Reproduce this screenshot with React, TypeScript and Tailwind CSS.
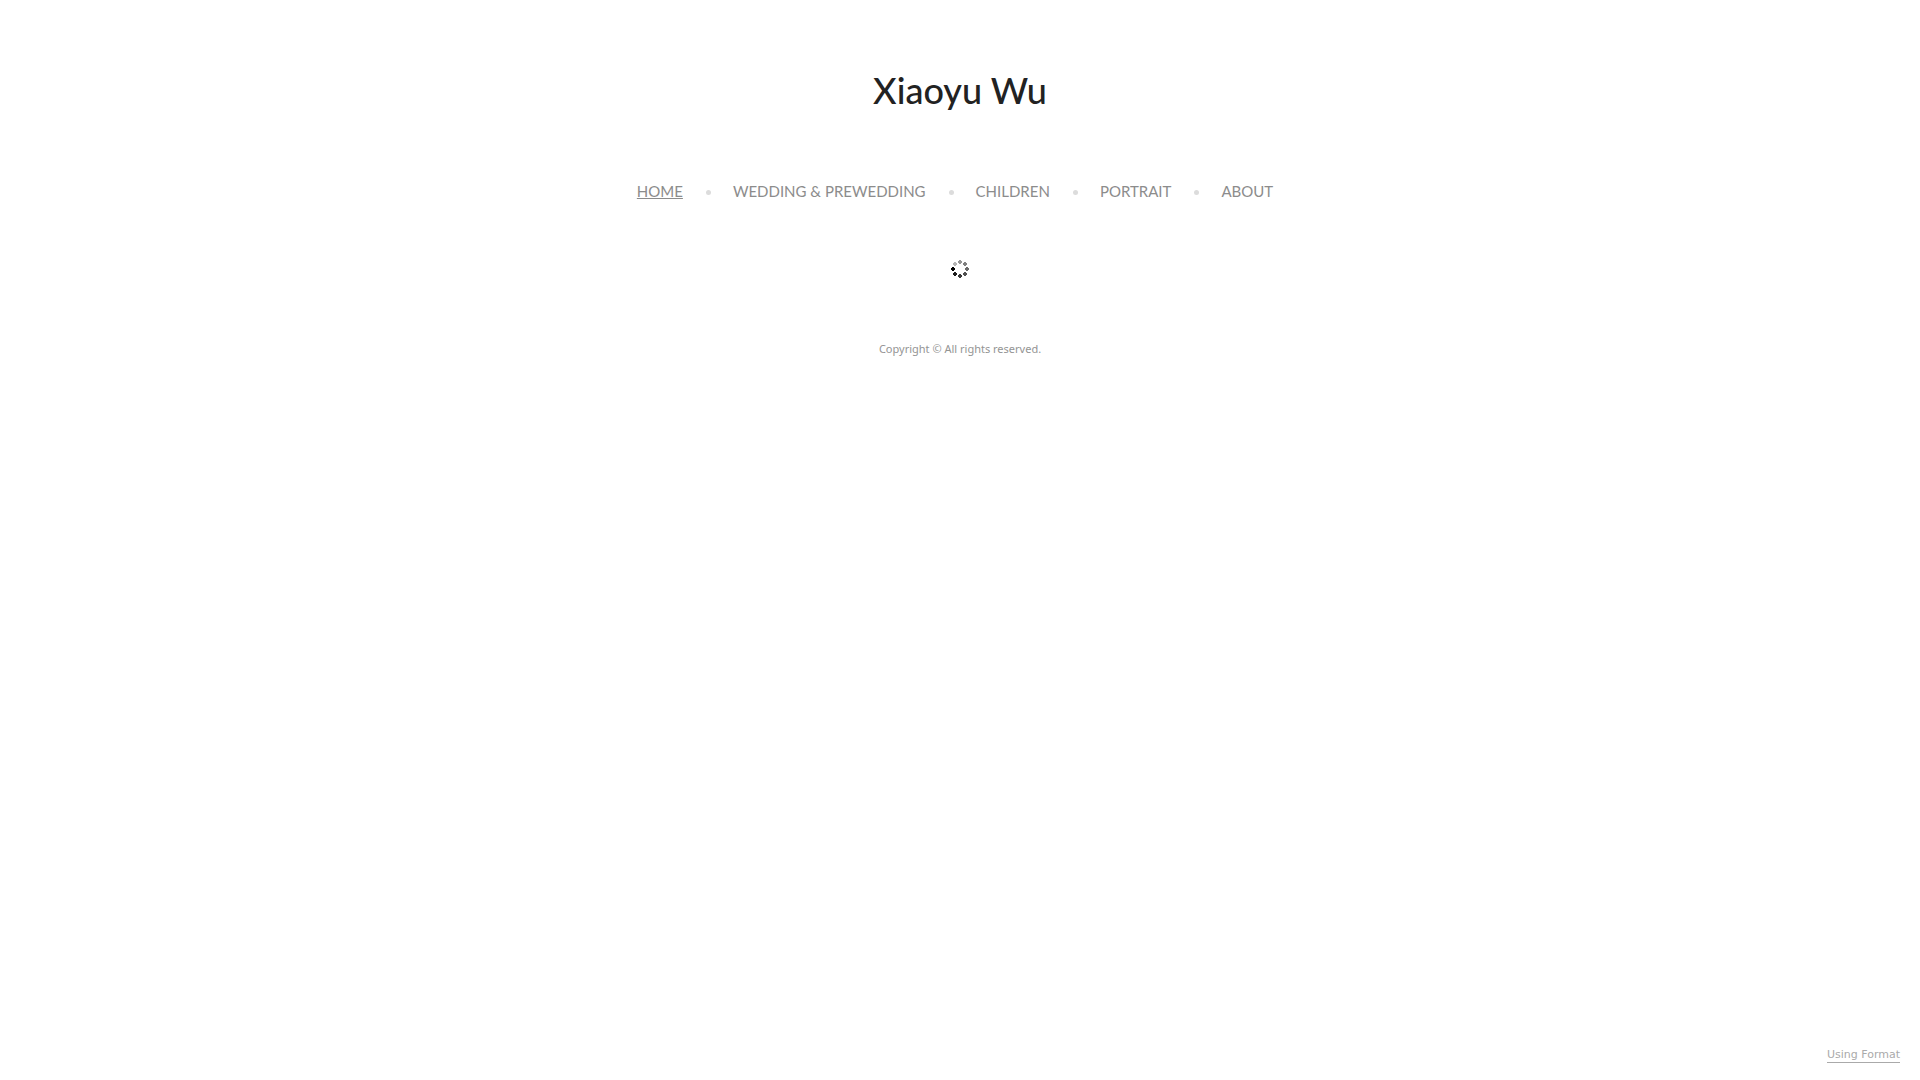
import React from 'react';

interface NavItem {
  label: string;
  href: string;
  active?: boolean;
}

const navItems: NavItem[] = [
  { label: 'Home', href: '#home', active: true },
  { label: 'Wedding & Prewedding', href: '#wedding' },
  { label: 'Children', href: '#children' },
  { label: 'Portrait', href: '#portrait' },
  { label: 'About', href: '#about' },
];

const spinnerDots = [
  { cx: 10, cy: 3, fill: '#969696' },
  { cx: 15, cy: 5, fill: '#808080' },
  { cx: 17, cy: 10, fill: '#6a6a6a' },
  { cx: 15, cy: 15, fill: '#505050' },
  { cx: 10, cy: 17, fill: '#383838' },
  { cx: 5, cy: 15, fill: '#1c1c1c' },
  { cx: 3, cy: 10, fill: '#000000' },
  { cx: 5, cy: 5, fill: '#b4b4b4' },
];

const Spinner: React.FC = () => (
  <svg className="size-5" viewBox="0 0 20 20" role="img" aria-label="Loading" shapeRendering="crispEdges">
    {spinnerDots.map(({ cx, cy, fill }) => (
      <path key={`${cx}-${cy}`} d={`M${cx - 1} ${cy - 2}h2v1h1v2h-1v1h-2v-1h-1v-2h1z`} fill={fill} />
    ))}
  </svg>
);

const SiteNav: React.FC = () => (
  <nav className="mt-[60px] pr-2.5">
    <ul className="flex flex-wrap items-center justify-center font-['Lato',sans-serif] text-[15px] leading-6 text-[#8c8c8c] uppercase">
      {navItems.map(({ label, href, active }, i) => (
        <li key={label} className="flex items-center">
          {i > 0 && <span className="mr-[22px] ml-[23px] mt-0.5 size-[5px] rounded-full bg-[#dcdcdc]" />}
          <a href={href} className={active ? 'underline' : ''}>
            {label}
          </a>
        </li>
      ))}
    </ul>
  </nav>
);

export default function App() {
  return (
    <div className="flex min-h-screen flex-col items-center bg-white">
      <header className="pt-[62px] text-center">
        <h1 className="font-['Lato',sans-serif] text-[36px] leading-[57px] font-medium text-[#222222]">
          <a href="#home">Xiaoyu Wu</a>
        </h1>
        <SiteNav />
      </header>

      <main className="mt-14">
        <Spinner />
      </main>

      <footer className="mt-[62px] flex w-full flex-1 flex-col items-center justify-between">
        <p className="font-['Noto_Sans',sans-serif] text-[11px] leading-4 text-[#949494]">
          Copyright © All rights reserved.
        </p>
        <a
          href="#format"
          className="mr-5 mb-[17px] self-end border-b border-[#aaaaaa] font-['DejaVu_Sans',sans-serif] text-[11px] leading-[14px] text-[#aaaaaa]"
        >
          Using Format
        </a>
      </footer>
    </div>
  );
}
